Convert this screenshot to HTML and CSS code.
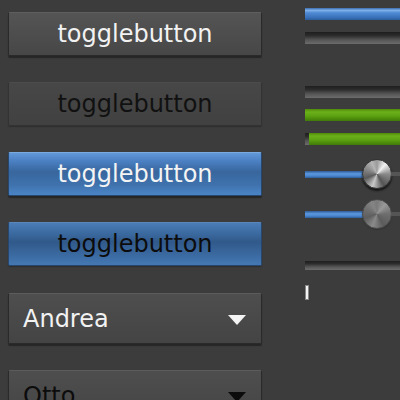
FILE: index.html
```html
<!DOCTYPE html>
<html>
<head>
    <meta charset="UTF-8">
    <title>widgets</title>
    <link rel="stylesheet" href="styles.css">
</head>
<body>
    <div class="page">
        <div class="left">
            <div class="toggle">togglebutton</div>
            <div class="toggle dim">togglebutton</div>
            <div class="toggle on">togglebutton</div>
            <div class="toggle on dim">togglebutton</div>
            <div class="combo">Andrea<span class="arrow"></span></div>
            <div class="combo dim">Otto<span class="arrow"></span></div>
        </div>
        <div class="right">
            <div class="bar b1"><div class="fill blue"></div></div>
            <div class="bar b2"></div>
            <div class="bar b3"></div>
            <div class="bar b4"><div class="fill green"></div></div>
            <div class="bar b5"><div class="fill green stub"></div></div>
            <div class="slider s1">
                <div class="track"></div>
                <div class="knob"></div>
                <div class="rest"></div>
            </div>
            <div class="slider s2">
                <div class="track"></div>
                <div class="knob off"></div>
                <div class="rest"></div>
            </div>
            <div class="bar b6"></div>
            <div class="cursor"></div>
        </div>
    </div>
</body>
</html>
```

FILE: styles.css
```css
html,
body {
    margin: 0;
    height: 100%;
    background-color: #3c3c3c;
    font-family: "DejaVu Sans", sans-serif;
}

.page {
    display: flex;
    height: 400px;
    overflow: hidden;
}

.left {
    width: 254px;
    padding-left: 8px;
    padding-top: 12px;
    display: flex;
    flex-direction: column;
    flex-shrink: 0;
}

.left > *,
.right > * {
    flex-shrink: 0;
}

.toggle {
    height: 41px;
    margin-bottom: 26px;
    border: 1px solid #2a2a2a;
    border-top-color: #5e5e5e;
    border-radius: 2px;
    background: linear-gradient(#545454, #474747);
    box-shadow: 0 2px 1px #262626;
    color: #f2f2f2;
    font-size: 24px;
    display: flex;
    align-items: center;
    justify-content: center;
    padding-bottom: 1px;
}

.toggle.dim {
    background: linear-gradient(#474747, #414141);
    border-color: #333;
    border-top-color: #4c4c4c;
    box-shadow: 0 1px 1px #2e2e2e;
    color: #111;
}

.toggle.on {
    background: linear-gradient(#6198d8, #4a7fc1 20%, #38669d 45%, #3f72ad 75%, #4a84c6);
    border-color: #27476e;
    border-top-color: #7aaae0;
    color: #f4f4f4;
}

.toggle.on.dim {
    background: linear-gradient(#4b7cb6, #3b6aa0 25%, #31598a 45%, #3c6ca4 80%, #4578b2);
    border-top-color: #5a88bd;
    color: #0c0c0c;
}

.combo {
    height: 49px;
    margin-top: 1px;
    margin-bottom: 25px;
    border: 1px solid #2a2a2a;
    border-top-color: #5c5c5c;
    border-radius: 2px;
    background: linear-gradient(#4e4e4e, #444);
    box-shadow: 0 2px 1px #262626;
    color: #f2f2f2;
    font-size: 24px;
    display: flex;
    align-items: center;
    justify-content: space-between;
    padding: 0 15px 0 14px;
}

.combo.dim {
    color: #0c0c0c;
}

.arrow {
    width: 0;
    height: 0;
    border-left: 9px solid transparent;
    border-right: 9px solid transparent;
    border-top: 10px solid #f4f4f4;
    margin-top: 2px;
}

.combo.dim .arrow {
    border-top-color: #0c0c0c;
}

.right {
    margin-left: 43px;
    width: 200px;
    flex-shrink: 0;
    display: flex;
    flex-direction: column;
}

.bar {
    height: 12px;
    background: linear-gradient(#1e1e1e, #2c2c2c 30%, #555 65%, #6c6c6c);
}

.b1 { margin-top: 8px; }
.b2 { margin-top: 12px; }
.b3 { margin-top: 42px; }
.b4 { margin-top: 11px; }
.b5 { margin-top: 12px; }
.b6 { margin-top: 32px; height: 9px; }

.fill {
    height: 100%;
}

.blue {
    background: linear-gradient(#3b6eb0, #7fb0ea 20%, #4f8ad4 40%, #3b74bd 75%, #2c5c99);
}

.green {
    background: linear-gradient(#4f8a0c, #6cb01a 25%, #5aa010 60%, #3f7a08);
}

.stub {
    margin-left: 4px;
}

.slider {
    display: flex;
    align-items: center;
    height: 30px;
}

.s1 { margin-top: 14px; }
.s2 { margin-top: 10px; }

.track {
    width: 58px;
    height: 7px;
    background: linear-gradient(#2e5a94, #5c98de 40%, #4a86cf 70%, #2d5d98);
}

.rest {
    flex: 1;
    height: 4px;
    background: #555;
    margin-left: -1px;
}

.knob {
    width: 28px;
    height: 28px;
    border-radius: 50%;
    border: 1px solid #333;
    background: conic-gradient(#9a9a9a, #f2f2f2 40deg, #8a8a8a 90deg, #555 150deg, #c8c8c8 200deg, #5a5a5a 250deg, #8d8d8d 300deg, #b5b5b5 335deg, #9a9a9a);
    box-shadow: 0 2px 2px #151515;
    margin-left: -1px;
}

.knob.off {
    background: conic-gradient(#7a7a7a, #999 40deg, #6e6e6e 90deg, #5c5c5c 150deg, #8a8a8a 200deg, #5e5e5e 250deg, #727272 300deg, #858585 335deg, #7a7a7a);
    border-color: #484848;
    box-shadow: 0 1px 1px #333;
}

.cursor {
    width: 2px;
    height: 13px;
    margin-top: 15px;
    background: #f4f4f4;
    border: 1px solid #888;
}
```
